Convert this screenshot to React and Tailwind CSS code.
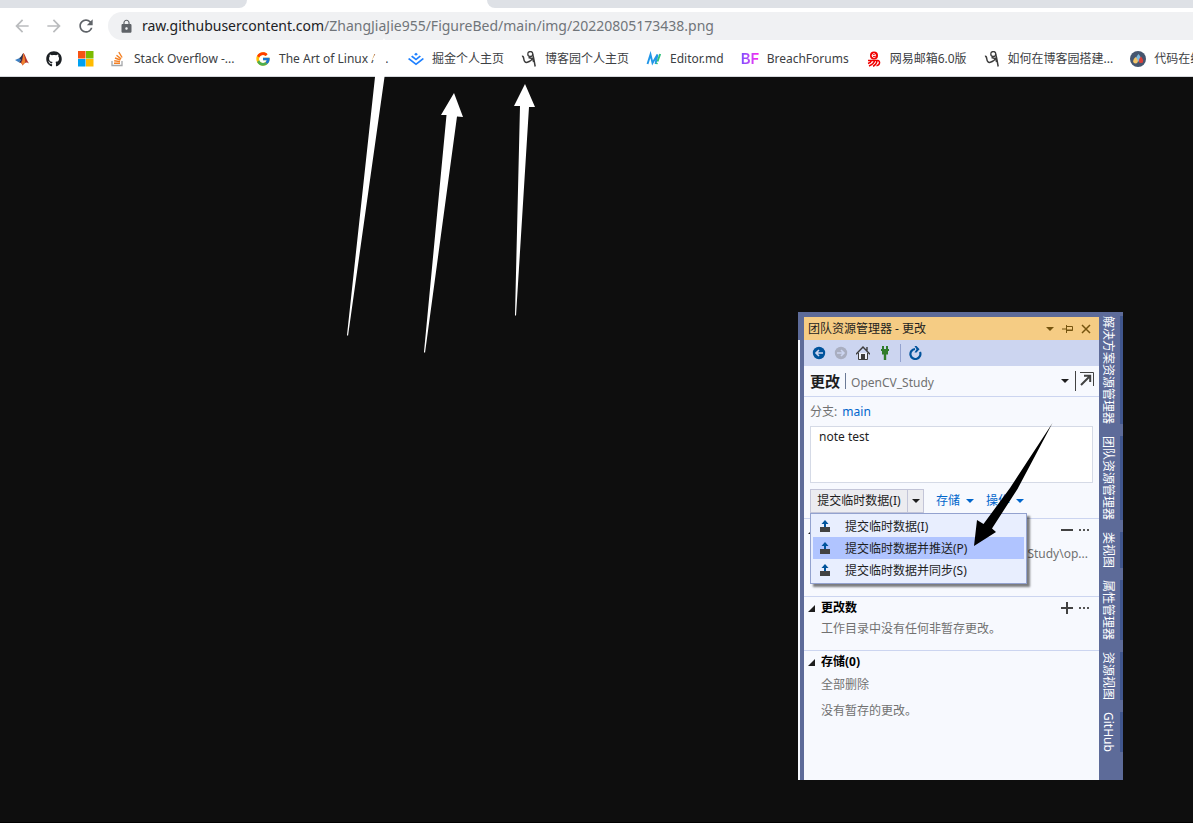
import React from "react";
import { FaGithub } from "react-icons/fa";
import { FcGoogle } from "react-icons/fc";
import { SiJuejin } from "react-icons/si";
import { MdArrowBack, MdArrowForward, MdRefresh, MdLock } from "react-icons/md";

const MatlabIcon = () => (
  <svg viewBox="0 0 16 16" className="size-4" aria-hidden="true">
    <path d="M1 9 L5 7.200 L7 9 L4.800 11.300 Z" fill="#3b7fc4" />
    <path d="M5 7.200 C7 6.500 8 3.500 9.300 2 L9.500 8 L6.800 12 L4.800 11.300 L7 9 Z" fill="#22324f" />
    <path d="M9.300 2 C11 3 12.500 9 15 12.500 C12.500 10.800 11 11.500 8.500 14.500 C8 13 7.400 12.200 6.600 11.800 C8 10 8.600 5 9.300 2 Z" fill="#b8342c" />
    <path d="M9.300 2 C10.500 5 11 8 11.300 11.500 C10 12.200 9.500 13.400 8.500 14.500 C8.200 13.200 7.900 12.500 7.300 12 C9 10 9 5 9.300 2 Z" fill="#ee8430" />
  </svg>
);

const MicrosoftIcon = () => (
  <svg viewBox="0 0 16 16" className="size-4" aria-hidden="true">
    <rect width="7.500" height="7.500" fill="#f65314" />
    <rect x="8" width="7.500" height="7.500" fill="#7cbb00" />
    <rect y="8" width="7.500" height="7.500" fill="#00a1f1" />
    <rect x="8" y="8" width="7.500" height="7.500" fill="#ffbb00" />
  </svg>
);

const StackIcon = () => (
  <svg viewBox="0 0 16 16" className="size-4" fill="none" aria-hidden="true">
    <path d="M2 10v4.500h10V10" stroke="#a5a7aa" strokeWidth="1.300" />
    <path d="M4 12.300h6M4.200 9.700l5.800.9M5 7l5.400 2M6.500 4.200l4.600 3.700M8.800 1.200l3.300 5.300" stroke="#f48024" strokeWidth="1.400" />
  </svg>
);

const CnblogsIcon = () => (
  <svg viewBox="0 0 16 16" className="size-4" fill="none" stroke="#3c3c3c" aria-hidden="true">
    <path d="M1 5.500C2 5 2.500 5.800 2.800 8c.4 2.500 1.400 3.800 3.500 3.300 2-.5 4.700-2.200 6-4.800" strokeWidth="1.500" />
    <circle cx="9.300" cy="3" r="2.500" strokeWidth="1.300" />
    <path d="M11.500 3c1.300 3 1.500 7 2.700 12.500M7.500 6.500l3.500 1M11.800 8l.8 3" strokeWidth="1.500" />
  </svg>
);

const EditorIcon = () => (
  <svg viewBox="0 0 16 16" className="size-4" fill="none" aria-hidden="true">
    <path d="M1.500 13L4.500 3.500L6.500 12L11.500 3.500L9.500 13" stroke="#2196e8" strokeWidth="1.900" />
    <path d="M14.200 3L11.500 10.500M11 11.800l-.4 1.200" stroke="#2fc27a" strokeWidth="1.900" />
  </svg>
);

const BreachIcon = () => (
  <span
    aria-hidden="true"
    className="block w-[18px] bg-gradient-to-r from-[#7a4cff] to-[#ff10f0] bg-clip-text font-['Inter',sans-serif] text-[15px] leading-4 font-semibold text-transparent"
  >
    BF
  </span>
);

const NeteaseIcon = () => (
  <svg viewBox="0 0 16 16" className="size-4" fill="none" stroke="#f00000" aria-hidden="true">
    <circle cx="8" cy="4.500" r="4" fill="#f00000" stroke="none" />
    <path d="M6.200 4.600h3.400c0-2.600-3.400-2.600-3.400 0 0 2.400 2.400 2.300 3.300 1.500" stroke="#fff" strokeWidth="1" />
    <path d="M2 9.500h10c2.500.5 2 5-1.500 5.200M2 12.500C4 12 5 11 5.500 9.500M3 15C5.500 14 8 12 8.700 9.500M7 15.200c2-.8 3.700-3 4-5.500" strokeWidth="1.500" />
  </svg>
);

const DropsIcon = () => (
  <svg viewBox="0 0 16 16" className="size-4" aria-hidden="true">
    <circle cx="8" cy="8" r="8" fill="#45566f" />
    <path d="M8.500 3c1.700 2.200 2.600 3.500 2.600 4.800a2.600 2.600 0 0 1-5.200 0c0-1.300.9-2.600 2.600-4.800Z" fill="#7fb9dc" />
    <path d="M11 5.500c1.500 1.800 2.200 3.200 2.200 4.400a2.200 2.200 0 0 1-4.400 0c0-1.200.7-2.600 2.200-4.400Z" fill="#d9403a" />
    <path d="M5.500 6c1.600 1.800 2.300 3 2.300 4.200a2.300 2.300 0 0 1-4.600 0c0-1.200.7-2.400 2.300-4.200Z" fill="#f3c567" />
  </svg>
);

const bookmarks = [
  { icon: <MatlabIcon />, name: "MATLAB" },
  { icon: <FaGithub className="size-4 text-[#1b1f23]" />, name: "GitHub" },
  { icon: <MicrosoftIcon />, name: "Microsoft" },
  { icon: <StackIcon />, label: "Stack Overflow -...", width: "w-[104px]" },
  { icon: <FcGoogle className="size-4" />, label: "The Art of Linux A...", width: "w-28" },
  { icon: <SiJuejin className="size-4 text-[#1e80ff]" />, label: "掘金个人主页" },
  { icon: <CnblogsIcon />, label: "博客园个人主页" },
  { icon: <EditorIcon />, label: "Editor.md" },
  { icon: <BreachIcon />, label: "BreachForums" },
  { icon: <NeteaseIcon />, label: "网易邮箱6.0版" },
  { icon: <CnblogsIcon />, label: "如何在博客园搭建..." },
  { icon: <DropsIcon />, label: "代码在线" },
];

function Browser() {
  return (
    <header className="border-b border-[#d5d8dc] bg-white">
      <div className="flex h-2 justify-between">
        <div className="w-[247px] rounded-br-lg bg-[#dee1e6]" />
        <div className="ml-60 flex-1 rounded-bl-lg bg-[#dee1e6]" />
      </div>
      <div className="flex items-center pt-1 pl-3">
        <button aria-label="Back" className="w-8 text-[#babcbe]"><MdArrowBack className="size-5" /></button>
        <button aria-label="Forward" className="w-8 text-[#babcbe]"><MdArrowForward className="size-5" /></button>
        <button aria-label="Reload" className="w-8 text-[#5f6368]"><MdRefresh className="size-5" /></button>
        <div className="flex h-7 flex-1 items-center gap-2 rounded-l-full bg-[#f0f1f3] pl-[11px]">
          <MdLock className="size-[15px] text-[#5f6368]" />
          <p className="text-sm leading-6 whitespace-nowrap text-[#70757a]">
            <span className="text-[#202124]">raw.githubusercontent.com</span>
            /ZhangJiaJie955/FigureBed/main/img/20220805173438.png
          </p>
        </div>
      </div>
      <nav className="flex h-9 items-center gap-4 overflow-hidden pt-px pl-[14px] text-xs text-[#3c4043]">
        {bookmarks.map((b, i) => (
          <a
            key={i}
            href="#"
            aria-label={b.label ? undefined : b.name}
            className={`flex shrink-0 items-center gap-2 ${b.label ? "pr-px" : ""}`}
          >
            {b.icon}
            {b.label && <span className={`whitespace-nowrap ${b.width ?? ""}`}>{b.label}</span>}
          </a>
        ))}
      </nav>
    </header>
  );
}

const Caret = () => (
  <svg viewBox="0 0 8 4" className="h-1 w-2 fill-current" aria-hidden="true"><path d="M0 0h8L4 4Z" /></svg>
);

const Expander = () => (
  <svg viewBox="0 0 7 7" className="size-[7px] fill-[#1e1e1e]" aria-hidden="true"><path d="M7 0v7H0Z" /></svg>
);

const Dots = () => (
  <button aria-label="More">
    <svg viewBox="0 0 10 2" className="h-[2px] w-[10px] fill-[#555]" aria-hidden="true">
      <path d="M0 0h2v2H0zM4 0h2v2H4zM8 0h2v2H8z" />
    </svg>
  </button>
);

const CommitIcon = () => (
  <svg viewBox="0 0 14 14" className="size-[14px]" aria-hidden="true">
    <path d="M2 7h10v5H2z" fill="#424242" />
    <path d="M7 0L10.500 4H8V7H6V4H3.500Z" fill="#00539c" />
  </svg>
);

const menuItems = ["提交临时数据(I)", "提交临时数据并推送(P)", "提交临时数据并同步(S)"];
const sideTabs = ["解决方案资源管理器", "团队资源管理器", "类视图", "属性管理器", "资源视图", "GitHub"];

function Section({ title, sign, children, className }) {
  return (
    <section className={`border-t border-[#ccd5f0] ${className}`}>
      <div className="flex h-[22px] items-center gap-[6px] pr-[10px] pl-1">
        <Expander />
        <h2 className="flex-1 font-bold text-black">{title}</h2>
        {sign && (
          <button aria-label={sign === "plus" ? "Stage all" : "Unstage all"}>
            <svg viewBox="0 0 12 12" className="size-3 stroke-[#424242]" strokeWidth="2" aria-hidden="true">
              <path d={sign === "plus" ? "M0 6h12M6 0v12" : "M0 6h12"} />
            </svg>
          </button>
        )}
        {sign && <Dots />}
      </div>
      {children}
    </section>
  );
}

function TeamExplorer() {
  return (
    <div className="mt-[235px] mr-[70px] ml-auto flex w-[325px] bg-[#5d6b99] text-xs text-[#1e1e1e]">
      <div className="mt-7 w-[2px] bg-[#f7f9fe]" />
      <div className="mt-[5px] ml-1 min-w-0 flex-1 bg-[#f7f9fe]">
        <div className="flex h-[23px] items-center bg-[#f5cc84] pr-2 pl-1">
          <h1 className="flex-1">团队资源管理器 - 更改</h1>
          <div className="flex items-center gap-2 text-[#75540f]">
            <button aria-label="Window options"><Caret /></button>
            <button aria-label="Pin">
              <svg viewBox="0 0 11 8" className="h-2 w-[11px]" fill="none" stroke="currentColor" aria-hidden="true">
                <path d="M0 4h4M4.500 0v8M4.500 1.500h6v4h-6M4.500 5h6" />
              </svg>
            </button>
            <button aria-label="Close">
              <svg viewBox="0 0 10 10" className="size-[10px]" stroke="currentColor" strokeWidth="1.500" aria-hidden="true"><path d="M1 1l8 8M9 1L1 9" /></svg>
            </button>
          </div>
        </div>
        <div className="flex h-[26px] items-center gap-2 bg-[#ccd5f0] pl-2">
          <button aria-label="Back">
            <svg viewBox="0 0 14 14" className="size-[14px]" aria-hidden="true">
              <circle cx="7" cy="7" r="6.200" fill="#00539c" />
              <path d="M11 7H4.500M7 4L4 7l3 3" fill="none" stroke="#ccd5f0" strokeWidth="1.600" />
            </svg>
          </button>
          <button aria-label="Forward">
            <svg viewBox="0 0 14 14" className="size-[14px]" aria-hidden="true">
              <circle cx="7" cy="7" r="6.200" fill="#a9aec0" />
              <path d="M3 7h6.500M7 4l3 3-3 3" fill="none" stroke="#ccd5f0" strokeWidth="1.600" />
            </svg>
          </button>
          <button aria-label="Home">
            <svg viewBox="0 0 14 14" className="size-[14px]" fill="none" stroke="#3c3c3c" aria-hidden="true">
              <path d="M2.500 7v6.500h9V7" fill="#eef0f8" />
              <path d="M0 8.200L7 1l7 7.200M11 1v3.500" strokeWidth="1.400" />
              <path d="M5 8h4v5.500H5z" fill="#3c3c3c" stroke="none" />
            </svg>
          </button>
          <button aria-label="Connect">
            <svg viewBox="0 0 14 14" className="size-[14px]" fill="#2f7d2b" aria-hidden="true">
              <path d="M4 0h2v3h2V0h2v3h1v2h-1v3.500H8.200V14H5.800V8.500H4V5H3V3h1z" />
            </svg>
          </button>
          <span className="h-[18px] w-px bg-[#93a2cf]" />
          <button aria-label="Refresh">
            <svg viewBox="0 0 14 14" className="size-[14px]" aria-hidden="true">
              <path d="M6 3A5 5 0 1 0 11 6" fill="none" stroke="#00539c" strokeWidth="2.200" />
              <path d="M5.500 0H7.500L10.500 3.200L7.500 6.500H5.500L7.500 3.200Z" fill="#00539c" />
            </svg>
          </button>
        </div>
        <div className="flex h-[31px] items-center border-b border-[#ccd5f0] pr-[5px] pl-[6px]">
          <span className="text-[15px] font-bold">更改</span>
          <span className="mx-[5px] h-4 w-px bg-[#6b7a96]" />
          <span className="flex-1 pt-1 text-[#717171]">OpenCV_Study</span>
          <button aria-label="Pages"><Caret /></button>
          <span className="mr-1 ml-[6px] h-5 w-px bg-[#424242]" />
          <button aria-label="Undock" className="pb-1">
            <svg viewBox="0 0 14 14" className="size-[14px]" fill="none" stroke="#424242" aria-hidden="true">
              <path d="M0 .5h13.500V14" />
              <path d="M1 13l9-9M4 3.800h6.200V10" strokeWidth="2" />
            </svg>
          </button>
        </div>
        <div className="px-[6px] pt-[5px]">
          <p className="leading-5 text-[#717171]">
            分支: <a href="#" className="ml-[2px] text-[#0066cc]">main</a>
          </p>
          <textarea
            aria-label="Commit message"
            defaultValue="note test"
            className="mt-1 block h-[57px] w-full resize-none border border-[#d5dae6] bg-white px-2 py-px leading-[18px] text-[#1e1e1e] outline-none"
          />
          <div className="relative mt-[6px] flex h-6 items-center text-[#0066cc]">
            <div className="flex h-6 w-[114px] border border-[#c3c5d8] bg-[#ececf0] text-[#1e1e1e]">
              <button className="flex-1 border-r border-[#c3c5d8] text-center whitespace-nowrap">提交临时数据(I)</button>
              <button aria-label="Commit options" className="flex w-[15px] items-center justify-center"><Caret /></button>
            </div>
            <button className="ml-3 flex items-center gap-[6px] whitespace-nowrap">存储 <Caret /></button>
            <button className="ml-3 flex items-center gap-[6px] whitespace-nowrap">操作 <Caret /></button>
            <ul className="absolute top-full left-0 z-10 w-[217px] border border-[#93a2cf] bg-[#e8eefe] px-[2px] pt-px pb-[2px] text-[#1e1e1e] shadow-[3px_3px_2px_rgba(0,0,0,0.5)]">
              {menuItems.map((m, i) => (
                <li key={m}>
                  <button className={`flex h-[22px] w-full items-center gap-[13px] pt-[2px] pl-[5px] whitespace-nowrap ${i === 1 ? "bg-[#b0c4ff]" : ""}`}>
                    <CommitIcon />
                    {m}
                  </button>
                </li>
              ))}
            </ul>
          </div>
        </div>
        <div className="pt-[5px]">
          <Section title="" sign="minus" className="h-[78px]">
            <p className="pt-[5px] pr-[11px] text-right leading-4 text-[#717171]">Study\op...</p>
          </Section>
          <Section title="更改数" sign="plus" className="h-[54px]">
            <p className="pl-[17px] leading-5 text-[#717171]">工作目录中没有任何非暂存更改。</p>
          </Section>
          <Section title="存储(0)" className="h-[130px]">
            <p className="pt-[2px] pl-[17px] leading-5"><a href="#" className="text-[#717171]">全部删除</a></p>
            <p className="pt-[6px] pl-[17px] leading-5 text-[#717171]">没有暂存的更改。</p>
          </Section>
        </div>
      </div>
      <div className="flex w-6 flex-col gap-3 pt-1">
        {sideTabs.map((t) => (
          <button
            key={t}
            className="flex w-6 items-center border-r-[3px] border-[#40568d] pr-1 leading-4 whitespace-nowrap text-white [text-orientation:sideways] [writing-mode:vertical-rl]"
          >
            {t}
          </button>
        ))}
      </div>
    </div>
  );
}

export default function App() {
  return (
    <div className="relative flex min-h-screen flex-col overflow-hidden border-b border-black bg-[#0e0e0e] font-['Noto_Sans','Noto_Sans_CJK_SC',sans-serif]">
      <Browser />
      <main className="flex-1 pb-8">
        <TeamExplorer />
      </main>
      <svg width="1193" height="823" viewBox="0 0 1193 823" className="pointer-events-none absolute top-0 left-0 z-20" aria-hidden="true">
        <g fill="#fff">
          <path d="M384 38L395 60L386 60L384.500 77L348 336L347 335L375 77L376 60L372 60Z" />
          <path d="M454 93L463 117L457 116.500L425 353L424 352L446.500 115L441 115Z" />
          <path d="M525 84L535 107L529 107L516 316L515 315L520 106L514 106Z" />
        </g>
        <path d="M1052.500 423L1017.500 489L992 528.500L996 532L974 546L977 520L983.500 524L1010 488Z" fill="#000" />
      </svg>
    </div>
  );
}
